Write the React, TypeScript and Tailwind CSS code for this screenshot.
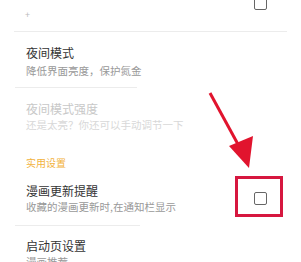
import React from 'react';

const font = { fontFamily: '"Noto Sans CJK SC", "Noto Sans", sans-serif' };

function Box() {
  return <div className="w-[13px] h-[13px] border-[1.5px] border-[#666] rounded-[2px]" />;
}

export default function App() {
  return (
    <div className="relative w-[301px] h-[262px] overflow-hidden bg-white" style={font}>
      {/* top row, mostly cut off */}
      <div className="relative h-[31px]">
        <div className="absolute left-[254px] top-[-3px]">
          <Box />
        </div>
        <div className="absolute left-[25px] top-[9px] text-[9px] leading-[12px] text-[#bbb]">+</div>
      </div>
      <div className="mx-[14px] h-px bg-[#ececec]" />

      <div className="pl-[26px] pt-[12px]">
        <div className="text-[12px] leading-[18px] text-[#333]">夜间模式</div>
        <div className="text-[10.5px] leading-[14px] text-[#999] mt-[2px]">降低界面亮度，保护氮金</div>
      </div>
      <div className="ml-[15px] mt-[9px] w-[122px] h-px bg-[#ececec]" />

      <div className="pl-[26px] pt-[12px]">
        <div className="text-[12px] leading-[18px] text-[#c8c8c8]">夜间模式强度</div>
        <div className="text-[10.5px] leading-[14px] text-[#d8d8d8]">还是太亮？你还可以手动调节一下</div>
      </div>

      <div className="pl-[26px] pt-[24px] text-[10px] leading-[14px] text-[#f2b33d]">实用设置</div>

      <div className="flex items-center justify-between pl-[26px] pr-[34px] pt-[12px]">
        <div>
          <div className="text-[12px] leading-[18px] text-[#333]">漫画更新提醒</div>
          <div className="text-[10.5px] leading-[14px] text-[#999]">收藏的漫画更新时,在通知栏显示</div>
        </div>
        <Box />
      </div>
      <div className="ml-[15px] mt-[11px] w-[125px] h-px bg-[#ececec]" />

      <div className="pl-[26px] pt-[11px]">
        <div className="text-[12px] leading-[18px] text-[#333]">启动页设置</div>
        <div className="text-[10.5px] leading-[14px] text-[#999]">漫画推荐</div>
      </div>

      {/* annotation overlay */}
      <div className="absolute left-[235px] top-[176px] w-[48px] h-[41px] border-[3px] border-[#d6173f]" />
      <svg className="absolute left-0 top-0" width="301" height="262" viewBox="0 0 301 262">
        <line x1="210" y1="93" x2="240" y2="148" stroke="#e1142e" strokeWidth="3" />
        <polygon points="249,168 229,146 253,136" fill="#e1142e" />
      </svg>
    </div>
  );
}
